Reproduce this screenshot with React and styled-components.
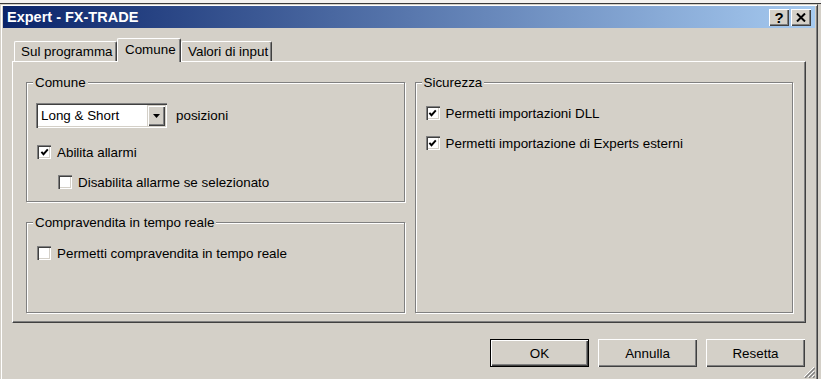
import React from 'react';
import styled, { createGlobalStyle } from 'styled-components';

const GlobalStyle = createGlobalStyle`
  html, body {
    margin: 0;
    padding: 0;
    background: #d4d0c8;
    overflow: hidden;
  }
  body {
    font-family: "Liberation Sans", Arial, sans-serif;
    font-size: 13.4px;
    color: #000;
  }
`;

function CheckMark() {
  return (
    <svg width="9" height="9" viewBox="0 0 9 9">
      <path d="M1.4 3.8 L3.5 6.2 L7.8 1.4" fill="none" stroke="#000" strokeWidth="1.9" />
    </svg>
  );
}

function Check({ checked, label, indent }) {
  return (
    <CheckRow $indent={indent}>
      <Box>{checked && <CheckMark />}</Box>
      <span>{label}</span>
    </CheckRow>
  );
}

function Group({ title, height, children, top }) {
  return (
    <GroupBox $height={height} $top={top}>
      <Legend>{title}</Legend>
      {children}
    </GroupBox>
  );
}

function App() {
  return (
    <>
      <GlobalStyle />
      <Desktop />
      <Window>
        <TitleBar>
          <Title>Expert - FX-TRADE</Title>
          <Caps>
            <CapButton>?</CapButton>
            <CapButton>
              <svg width="10" height="9" viewBox="0 0 10 9">
                <path d="M1 0.5 L9 8.5 M9 0.5 L1 8.5" stroke="#000" strokeWidth="2" />
              </svg>
            </CapButton>
          </Caps>
        </TitleBar>

        <Body>
          <TabRow>
            <Tab $width={103}>Sul programma</Tab>
            <Tab $width={64} $active>Comune</Tab>
            <Tab $width={91}>Valori di input</Tab>
          </TabRow>

          <Panel>
            <Column>
              <Group title="Comune" height={120} top={20}>
                <ComboRow>
                  <Combo>
                    <span>Long &amp; Short</span>
                    <DropButton>
                      <svg width="7" height="4" viewBox="0 0 7 4">
                        <path d="M0 0 H7 L3.5 4 Z" fill="#000" />
                      </svg>
                    </DropButton>
                  </Combo>
                  <span>posizioni</span>
                </ComboRow>
                <Stack>
                  <Check checked label="Abilita allarmi" />
                  <Check label="Disabilita allarme se selezionato" indent={21} />
                </Stack>
              </Group>
              <Group title="Compravendita in tempo reale" height={91} top={23}>
                <Check label="Permetti compravendita in tempo reale" />
              </Group>
            </Column>
            <Column>
              <Group title="Sicurezza" height={231} top={23}>
                <Stack>
                  <Check checked label="Permetti importazioni DLL" />
                  <Check checked label="Permetti importazione di Experts esterni" />
                </Stack>
              </Group>
            </Column>
          </Panel>

          <Footer>
            <PushButton $default>OK</PushButton>
            <PushButton>Annulla</PushButton>
            <PushButton>Resetta</PushButton>
          </Footer>
        </Body>

        <Grip>
          <svg width="12" height="12" viewBox="0 0 12 12">
            <path d="M11 1 L1 11 M11 5 L5 11 M11 9 L9 11" stroke="#fff" strokeWidth="1" />
            <path d="M12 2 L2 12 M12 6 L6 12 M12 10 L10 12" stroke="#808080" strokeWidth="1.4" />
          </svg>
        </Grip>
      </Window>
    </>
  );
}
export default App;

const Desktop = styled.div`
  height: 3px;
  background: #f4f2f0;
  border-bottom: 1px solid #3a3a3a;
`;

const Window = styled.div`
  position: relative;
  box-sizing: border-box;
  width: 818px;
  height: 376px;
  padding: 1px 2px 0 2px;
  background: #d4d0c8;
  border: 1px solid #d4d0c8;
  border-right-color: #404040;
  box-shadow: inset 1px 1px 0 #fff, inset -1px 0 0 #808080;
`;

const TitleBar = styled.div`
  display: flex;
  align-items: center;
  justify-content: space-between;
  height: 22px;
  padding: 0 4px;
  background: linear-gradient(to right, #0a246a, #a6caf0);
`;

const Title = styled.div`
  color: #fff;
  font-weight: bold;
  font-size: 14.5px;
`;

const Caps = styled.div`
  display: flex;
  gap: 2px;
  padding-top: 1px;
`;

const CapButton = styled.div`
  box-sizing: border-box;
  width: 20px;
  height: 17px;
  display: flex;
  align-items: center;
  justify-content: center;
  background: #d4d0c8;
  font-weight: bold;
  font-size: 15px;
  box-shadow: inset 1px 1px 0 #fff, inset -1px -1px 0 #404040, inset -2px -2px 0 #808080;
`;

const Body = styled.div`
  padding: 10px 9px 0 9px;
`;

const TabRow = styled.div`
  display: flex;
  align-items: flex-end;
  height: 23px;
  padding-left: 2px;
`;

const Tab = styled.div`
  position: relative;
  z-index: ${p => (p.$active ? 2 : 1)};
  box-sizing: border-box;
  width: ${p => p.$width}px;
  height: ${p => (p.$active ? 24 : 20)}px;
  margin-bottom: ${p => (p.$active ? -1 : 0)}px;
  padding: ${p => (p.$active ? '2px 0 0 7px' : '1px 0 0 6px')};
  background: #d4d0c8;
  border-top: 1px solid #fff;
  border-left: 1px solid #fff;
  border-right: 1px solid #404040;
  border-radius: 2px 2px 0 0;
  box-shadow: inset -1px 0 0 #808080;
  line-height: 17px;
  white-space: nowrap;
`;

const Panel = styled.div`
  display: flex;
  gap: 10px;
  height: 262px;
  box-sizing: border-box;
  padding: 20px 12px 0 13px;
  border: 1px solid #fff;
  border-right-color: #404040;
  border-bottom-color: #404040;
  box-shadow: inset -1px -1px 0 #808080;
`;

const Column = styled.div`
  display: flex;
  flex-direction: column;
  gap: 20px;
  flex: 1;
`;

const GroupBox = styled.div`
  position: relative;
  box-sizing: border-box;
  height: ${p => p.$height}px;
  padding: ${p => p.$top}px 10px 0 10px;
  border: 1px solid #808080;
  box-shadow: inset 1px 1px 0 #fff, 1px 1px 0 #fff;
`;

const Legend = styled.div`
  position: absolute;
  top: -8px;
  left: 6px;
  padding: 0 2px;
  background: #d4d0c8;
  line-height: 15px;
`;

const ComboRow = styled.div`
  display: flex;
  align-items: center;
  gap: 9px;
  margin-left: -1px;
  margin-bottom: 17px;
`;

const Combo = styled.div`
  box-sizing: border-box;
  width: 131px;
  height: 25px;
  display: flex;
  align-items: center;
  justify-content: space-between;
  padding: 2px 2px 2px 5px;
  background: #fff;
  box-shadow: inset 1px 1px 0 #808080, inset 2px 2px 0 #404040, inset -1px -1px 0 #fff, inset -2px -2px 0 #d4d0c8;
`;

const DropButton = styled.div`
  box-sizing: border-box;
  width: 18px;
  height: 21px;
  display: flex;
  align-items: center;
  justify-content: center;
  background: #d4d0c8;
  box-shadow: inset 1px 1px 0 #d4d0c8, inset 2px 2px 0 #fff, inset -1px -1px 0 #404040, inset -2px -2px 0 #808080;
`;

const Stack = styled.div`
  display: flex;
  flex-direction: column;
  gap: 16px;
`;

const CheckRow = styled.div`
  display: flex;
  align-items: center;
  gap: 6px;
  height: 14px;
  padding-left: ${p => p.$indent || 0}px;
  white-space: nowrap;
`;

const Box = styled.div`
  box-sizing: border-box;
  width: 14px;
  height: 14px;
  flex: none;
  display: flex;
  align-items: center;
  justify-content: center;
  background: #fff;
  box-shadow: inset 1px 1px 0 #808080, inset 2px 2px 0 #404040, inset -1px -1px 0 #fff, inset -2px -2px 0 #d4d0c8;
`;

const Footer = styled.div`
  display: flex;
  justify-content: flex-end;
  gap: 9px;
  padding: 16px 1px 0 0;
`;

const PushButton = styled.div`
  box-sizing: border-box;
  width: 99px;
  height: 28px;
  display: flex;
  align-items: center;
  justify-content: center;
  background: #d4d0c8;
  border: ${p => (p.$default ? '1px solid #000' : 'none')};
  box-shadow: inset 1px 1px 0 #fff, inset -1px -1px 0 #404040, inset -2px -2px 0 #808080;
`;

const Grip = styled.div`
  position: absolute;
  right: 2px;
  bottom: 1px;
  width: 12px;
  height: 12px;
  display: flex;
`;
